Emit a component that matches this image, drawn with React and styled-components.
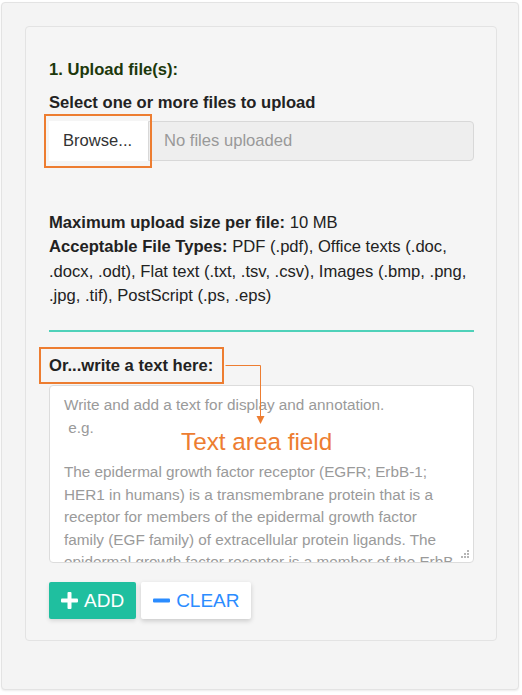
import styled, { createGlobalStyle } from 'styled-components';

const GlobalStyle = createGlobalStyle`
  body {
    margin: 0;
    background: #ffffff;
    font-family: "Liberation Sans", Arial, sans-serif;
  }
`;

const PLACEHOLDER =
  'Write and add a text for display and annotation.\n e.g.\n\nThe epidermal growth factor receptor (EGFR; ErbB-1; HER1 in humans) is a transmembrane protein that is a receptor for members of the epidermal growth factor family (EGF family) of extracellular protein ligands. The epidermal growth factor receptor is a member of the ErbB family of receptors.';

const App = () => {
  return (
    <Page>
      <GlobalStyle />
      <OuterPanel>
        <InnerPanel>
          <StepTitle>1. Upload file(s):</StepTitle>
          <FieldLabel>Select one or more files to upload</FieldLabel>
          <FileRow>
            <Highlight>
              <BrowseButton>Browse...</BrowseButton>
            </Highlight>
            <FileName>No files uploaded</FileName>
          </FileRow>

          <Info>
            <InfoLine>
              <b>Maximum upload size per file:</b> 10 MB
            </InfoLine>
            <InfoLine>
              <b>Acceptable File Types:</b> PDF (.pdf), Office texts (.doc,
              .docx, .odt), Flat text (.txt, .tsv, .csv), Images (.bmp, .png,
              .jpg, .tif), PostScript (.ps, .eps)
            </InfoLine>
          </Info>

          <Divider />

          <TextSection>
            <TextLabelBox>
              <TextLabel>Or...write a text here:</TextLabel>
            </TextLabelBox>
            <TextArea placeholder={PLACEHOLDER} />
            <Connector width="60" height="70" viewBox="0 0 60 70">
              <polyline points="0.5,1.5 35.5,1.5 35.5,54" fill="none" stroke="#ed7d31" strokeWidth="1" />
              <polygon points="31.5,52 39.5,52 35.5,60" fill="#ed7d31" />
            </Connector>
            <Annotation>Text area field</Annotation>
            <Grip>
              <i /><i /><i /><i /><i /><i />
            </Grip>
          </TextSection>

          <Actions>
            <ActionButton $variant="add">
              <svg width="17" height="17" viewBox="0 0 17 17">
                <rect x="6.5" y="0" width="4" height="17" rx="1" fill="currentColor" />
                <rect x="0" y="6.5" width="17" height="4" rx="1" fill="currentColor" />
              </svg>
              ADD
            </ActionButton>
            <ActionButton $variant="clear">
              <svg width="17" height="17" viewBox="0 0 17 17">
                <rect x="0" y="6.5" width="17" height="4" rx="1" fill="currentColor" />
              </svg>
              CLEAR
            </ActionButton>
          </Actions>
        </InnerPanel>
      </OuterPanel>
    </Page>
  );
};

export default App;

const Page = styled.div`
  padding: 2px 2px 4px 1px;
  width: 518px;
`;

const OuterPanel = styled.div`
  background: #f4f4f4;
  border: 1px solid #e3e3e3;
  border-radius: 4px;
  box-shadow: 0 1px 2px rgba(0, 0, 0, 0.08);
  padding: 23px 22px 48px 23px;
  height: 688px;
  box-sizing: border-box;
`;

const InnerPanel = styled.div`
  background: #f5f5f5;
  border: 1px solid #e3e3e3;
  border-radius: 4px;
  padding: 33px 22px 21px 23px;
  width: 472px;
  box-sizing: border-box;
`;

const StepTitle = styled.div`
  font-size: 16.6px;
  font-weight: bold;
  color: #1c380b;
  line-height: 20px;
`;

const FieldLabel = styled.div`
  font-size: 16.6px;
  font-weight: bold;
  color: #222;
  line-height: 20px;
  margin-top: 13px;
`;

const FileRow = styled.div`
  display: flex;
  align-items: center;
  margin-top: 1px;
`;

const Highlight = styled.div`
  border: 2px solid #ed7d31;
  padding: 5px 2px 5px 3px;
  margin-left: -5px;
  margin-right: -4px;
  position: relative;
  z-index: 1;
`;

const BrowseButton = styled.div`
  width: 99px;
  height: 40px;
  background: #ffffff;
  font-size: 16.6px;
  color: #333;
  display: flex;
  align-items: center;
  padding-left: 14px;
  box-sizing: border-box;
`;

const FileName = styled.div`
  flex: 1;
  height: 40px;
  background: #eeeeee;
  border: 1px solid #d8d8d8;
  border-radius: 0 4px 4px 0;
  font-size: 16.6px;
  color: #999;
  display: flex;
  align-items: center;
  padding-left: 15px;
  box-sizing: border-box;
`;

const Info = styled.div`
  margin-top: 43px;
  font-size: 16.6px;
  line-height: 24.3px;
  color: #222;
`;

const InfoLine = styled.p`
  margin: 0;
`;

const Divider = styled.hr`
  border: 0;
  height: 2px;
  background: #4fd1b9;
  margin: 22px 0 15px;
`;

const TextSection = styled.div`
  position: relative;
`;

const TextLabelBox = styled.div`
  display: inline-block;
  border: 2px solid #ed7d31;
  padding: 7px 9px 6px 8px;
  margin-left: -10px;
`;

const TextLabel = styled.div`
  font-size: 16.6px;
  font-weight: bold;
  color: #222;
  line-height: 20px;
`;

const TextArea = styled.textarea`
  display: block;
  width: 100%;
  height: 178px;
  box-sizing: border-box;
  margin-top: 1px;
  border: 1px solid #dcdcdc;
  border-radius: 4px;
  background: #fff;
  padding: 8px 14px;
  font-family: "Liberation Sans", Arial, sans-serif;
  font-size: 15.3px;
  line-height: 22.4px;
  resize: none;
  overflow: hidden;
  &::placeholder {
    color: #9a9a9a;
  }
`;

const Connector = styled.svg`
  position: absolute;
  left: 176px;
  top: 17px;
`;

const Annotation = styled.div`
  position: absolute;
  left: 132px;
  top: 81px;
  font-size: 24.3px;
  color: #ed7d31;
  pointer-events: none;
`;

const Grip = styled.div`
  position: absolute;
  right: 4px;
  bottom: 4px;
  width: 9px;
  height: 9px;
  display: grid;
  grid-template-columns: repeat(3, 3px);
  grid-template-rows: repeat(3, 3px);
  i {
    width: 2px;
    height: 2px;
    background: #b5b5b5;
  }
  i:nth-child(1) { grid-column: 3; grid-row: 1; }
  i:nth-child(2) { grid-column: 2; grid-row: 2; }
  i:nth-child(3) { grid-column: 3; grid-row: 2; }
  i:nth-child(4) { grid-column: 1; grid-row: 3; }
  i:nth-child(5) { grid-column: 2; grid-row: 3; }
  i:nth-child(6) { grid-column: 3; grid-row: 3; }
`;

const Actions = styled.div`
  display: flex;
  gap: 5px;
  margin-top: 19px;
`;

const ActionButton = styled.button`
  display: flex;
  align-items: center;
  gap: 6px;
  height: 37px;
  padding: 0 12px;
  border: none;
  border-radius: 2px;
  font-family: "Liberation Sans", Arial, sans-serif;
  font-size: 19px;
  cursor: pointer;
  background: ${(p) => (p.$variant === 'add' ? '#1fbf9f' : '#ffffff')};
  color: ${(p) => (p.$variant === 'add' ? '#ffffff' : '#2b8cff')};
  box-shadow: ${(p) =>
    p.$variant === 'add' ? '0 2px 4px rgba(0,0,0,0.12)' : '0 2px 5px rgba(0,0,0,0.18)'};
`;
